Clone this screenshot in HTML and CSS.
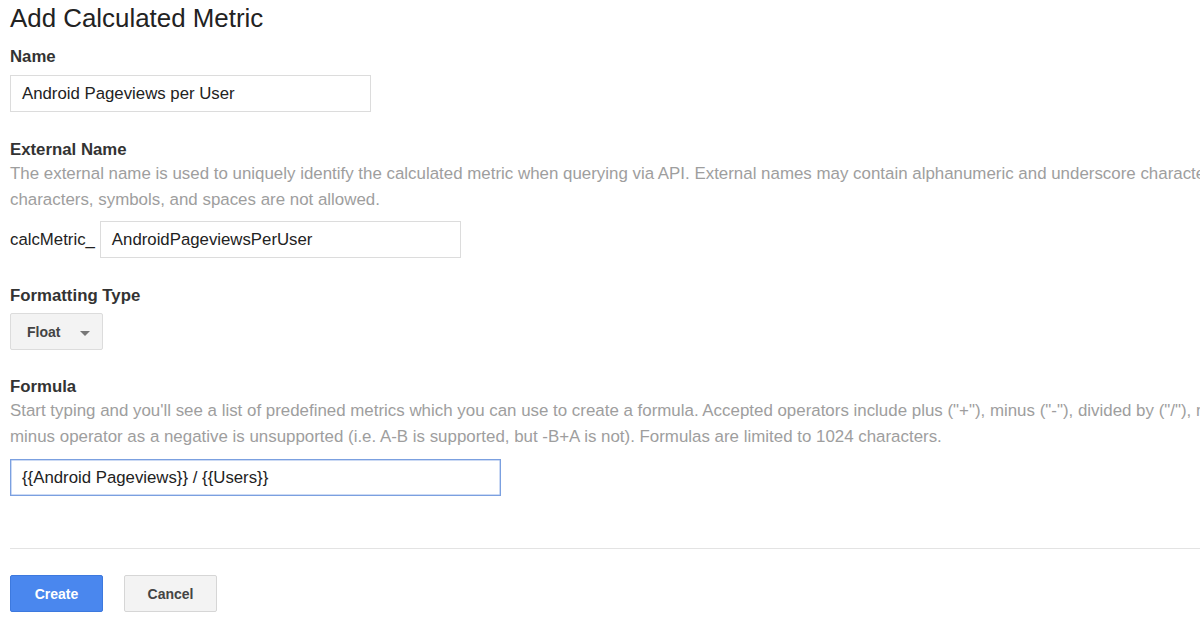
FILE: index.html
```html
<!DOCTYPE html>
<html>
<head>
<meta charset="utf-8">
<link rel="stylesheet" href="styles.css">
</head>
<body>
<div class="page">
  <h1 class="title">Add Calculated Metric</h1>

  <section class="field f-name">
    <div class="label">Name</div>
    <div class="input w360">Android Pageviews per User</div>
  </section>

  <section class="field f-ext">
    <div class="label">External Name</div>
    <div class="desc">
      <div class="line">The external name is used to uniquely identify the calculated metric when querying via API. External names may contain alphanumeric and underscore characters. Special</div>
      <div class="line">characters, symbols, and spaces are not allowed.</div>
    </div>
    <div class="prefix-row">
      <span class="prefix">calcMetric_</span>
      <div class="input w360">AndroidPageviewsPerUser</div>
    </div>
  </section>

  <section class="field f-fmt">
    <div class="label">Formatting Type</div>
    <div class="select">
      <span>Float</span>
      <span class="caret"></span>
    </div>
  </section>

  <section class="field f-formula">
    <div class="label">Formula</div>
    <div class="desc">
      <div class="line">Start typing and you'll see a list of predefined metrics which you can use to create a formula. Accepted operators include plus ("+"), minus ("-"), divided by ("/"), multiplied by ("*"). Using the</div>
      <div class="line">minus operator as a negative is unsupported (i.e. A-B is supported, but -B+A is not). Formulas are limited to 1024 characters.</div>
    </div>
    <div class="input w490 focused">{{Android Pageviews}} / {{Users}}</div>
  </section>

  <hr class="divider">

  <div class="actions">
    <button class="btn primary">Create</button>
    <button class="btn">Cancel</button>
  </div>
</div>
</body>
</html>
```

FILE: styles.css
```css
html, body {
  margin: 0;
  padding: 0;
  background: #fff;
  overflow: hidden;
}
body {
  width: 1200px;
  height: 617px;
  font-family: "Liberation Sans", Arial, sans-serif;
  color: #222;
}
.page {
  padding: 0 0 0 10px;
  width: 1500px;
}
.title {
  margin: 0;
  padding-top: 4px;
  font-size: 25.9px;
  font-weight: normal;
  line-height: 28px;
  color: #222;
}
.field { display: flex; flex-direction: column; align-items: flex-start; }
.label {
  font-size: 16.8px;
  font-weight: bold;
  color: #333;
  line-height: 20px;
}
.f-name { margin-top: 15px; }
.f-name .label { margin-bottom: 8px; }
.f-ext { margin-top: 28px; }
.f-fmt { margin-top: 28px; }
.f-fmt .label { margin-bottom: 7px; }
.f-formula { margin-top: 27px; }
.desc {
  font-size: 16.9px;
  color: #9e9e9e;
  line-height: 26px;
  margin-top: 1px;
}
.line { white-space: nowrap; }
.input {
  box-sizing: border-box;
  height: 37px;
  border: 1px solid #dcdcdc;
  padding: 0 11px;
  font-size: 16.8px;
  line-height: 35px;
  color: #222;
  background: #fff;
  white-space: nowrap;
}
.w360 { width: 361px; }
.w490 { width: 491px; }
.focused { border-color: #7ba0e0; box-shadow: inset 0 0 0 0.5px #9ab6ea; }
.prefix-row {
  display: flex;
  align-items: center;
  gap: 5px;
  margin-top: 8px;
}
.prefix { font-size: 16.8px; color: #222; }
.f-formula .input { margin-top: 9px; }
.select {
  box-sizing: border-box;
  width: 93px;
  height: 37px;
  border: 1px solid #dcdcdc;
  border-radius: 2px;
  background: #f3f3f3;
  display: flex;
  align-items: center;
  padding-left: 16px;
  font-size: 14px;
  font-weight: bold;
  color: #444;
}
.caret {
  width: 0; height: 0;
  margin-left: 20px;
  margin-top: 3px;
  border-left: 5px solid transparent;
  border-right: 5px solid transparent;
  border-top: 5px solid #777;
}
.divider {
  border: 0;
  border-top: 1px solid #e3e3e3;
  margin: 52px 0 0 0;
  width: 1190px;
}
.actions {
  display: flex;
  gap: 21px;
  margin-top: 26px;
}
.btn {
  box-sizing: border-box;
  width: 93px;
  height: 37px;
  border: 1px solid #d6d6d6;
  border-radius: 2px;
  background: #f3f3f3;
  font-family: "Liberation Sans", Arial, sans-serif;
  font-size: 14px;
  font-weight: bold;
  color: #444;
  padding: 0;
}
.btn.primary {
  background: #4a87ee;
  border-color: #3d79de;
  color: #fff;
}
```
